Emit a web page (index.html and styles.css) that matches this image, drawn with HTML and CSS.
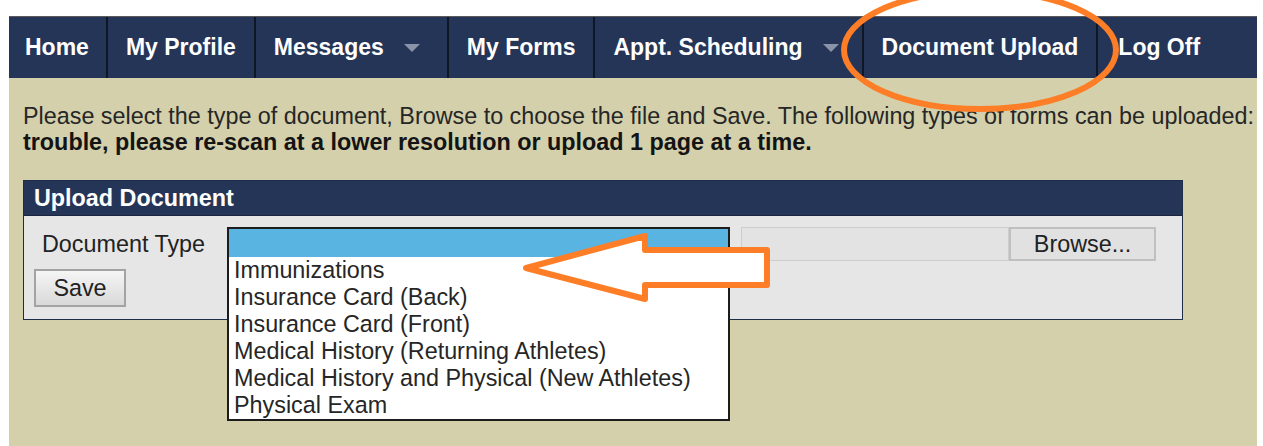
FILE: index.html
```html
<!DOCTYPE html>
<html lang="en">
<head>
<meta charset="utf-8">
<title>Document Upload</title>
<link rel="stylesheet" href="styles.css">
</head>
<body>
<div class="page">
  <nav class="topnav">
    <a class="nav-item first" href="#">Home</a>
    <a class="nav-item" href="#">My Profile</a>
    <a class="nav-item has-menu messages" href="#">Messages<span class="caret"></span></a>
    <a class="nav-item" href="#">My Forms</a>
    <a class="nav-item has-menu scheduling" href="#">Appt. Scheduling<span class="caret"></span></a>
    <a class="nav-item" href="#">Document Upload</a>
    <a class="nav-item last" href="#">Log Off</a>
  </nav>

  <main class="content">
    <p class="intro">
      <span class="line">Please select the type of document, Browse to choose the file and Save. The following types of forms can be uploaded:</span>
      <strong class="line">trouble, please re-scan at a lower resolution or upload 1 page at a time.</strong>
    </p>

    <section class="panel">
      <h2 class="panel-title">Upload Document</h2>
      <div class="panel-body">
        <div class="field-row">
          <label class="field-label">Document Type</label>
          <div class="select-wrap">
            <div class="select-box"></div>
            <ul class="select-list">
              <li class="selected"></li>
              <li>Immunizations</li>
              <li>Insurance Card (Back)</li>
              <li>Insurance Card (Front)</li>
              <li>Medical History (Returning Athletes)</li>
              <li>Medical History and Physical (New Athletes)</li>
              <li>Physical Exam</li>
            </ul>
          </div>
          <div class="file-input">
            <span class="file-name"></span>
            <button class="browse" type="button">Browse...</button>
          </div>
        </div>
        <button class="save" type="button">Save</button>
      </div>
    </section>
  </main>
</div>

<svg class="markup" width="1263" height="446" viewBox="0 0 1263 446" aria-hidden="true">
  <ellipse cx="980" cy="50" rx="136" ry="59" fill="none" stroke="#fd7e26" stroke-width="6"/>
  <polygon points="526,268 645,236 645,250 767,250 767,285 645,285 645,299"
           fill="#ffffff" stroke="#fd7e26" stroke-width="6" stroke-linejoin="round"/>
</svg>
</body>
</html>
```

FILE: styles.css
```css
* {
  box-sizing: border-box;
}

html,
body {
  margin: 0;
  padding: 0;
  background: #ffffff;
}

body {
  position: relative;
  width: 1263px;
  height: 446px;
  overflow: hidden;
  font-family: "Liberation Sans", Arial, sans-serif;
  font-size: 23.35px;
  color: #262626;
}

.page {
  margin: 16px 0 0 9px;
  width: 1248px;
  height: 430px;
  background: #d3d0ab;
  overflow: hidden;
}

/* ---- top navigation ---- */
.topnav {
  display: flex;
  height: 62px;
  background: #253558;
  border-top: 1px solid #5a5a5a;
  font-size: 23px;
}

.nav-item {
  display: flex;
  align-items: center;
  padding: 0 18px;
  color: #ffffff;
  font-weight: bold;
  text-decoration: none;
  white-space: nowrap;
  border-right: 2px solid #0f1626;
}

.nav-item.first {
  padding-left: 16px;
  padding-right: 17px;
}

.nav-item.messages {
  padding-right: 27px;
}

.nav-item.scheduling {
  padding-right: 23px;
}

.nav-item.last {
  border-right: 0;
  padding-left: 20px;
}

.caret {
  width: 0;
  height: 0;
  margin-left: 20px;
  border-left: 8px solid transparent;
  border-right: 8px solid transparent;
  border-top: 8px solid #8a93a8;
}

/* ---- page content ---- */
.content {
  padding: 25px 0 0 14px;
}

.intro {
  margin: 0 0 25px 0;
  line-height: 26px;
}

.intro .line {
  display: block;
  white-space: nowrap;
}

.intro strong {
  color: #141414;
}

/* ---- upload panel ---- */
.panel {
  width: 1160px;
  border: 1px solid #1f2c4a;
}

.panel-title {
  margin: 0;
  height: 35px;
  padding-left: 10px;
  font-size: 23.35px;
  line-height: 34px;
  font-weight: bold;
  color: #ffffff;
  background: #253558;
  border-bottom: 1px solid #1b2540;
}

.panel-body {
  display: flex;
  flex-direction: column;
  align-items: flex-start;
  gap: 8px;
  height: 103px;
  padding: 11px 0 0 10px;
  background: #e6e6e6;
}

.field-row {
  display: grid;
  grid-template-columns: 182px 503px 415px;
  column-gap: 11px;
  align-items: center;
  height: 34px;
}

.field-label {
  padding-left: 8px;
  color: #222222;
  white-space: nowrap;
}

.select-wrap {
  position: relative;
  height: 34px;
}

.select-box {
  height: 34px;
  border: 1px solid #a9a9a9;
  background: #ffffff;
}

.select-list {
  position: absolute;
  top: 0;
  left: 0;
  z-index: 2;
  width: 503px;
  margin: 0;
  padding: 0;
  list-style: none;
  background: #ffffff;
  border: 2px solid #1c1c1c;
}

.select-list li {
  height: 27px;
  padding-left: 5px;
  line-height: 27px;
  color: #262626;
  white-space: nowrap;
}

.select-list li.selected {
  height: 28px;
  background: #5ab4e1;
}

.file-input {
  display: flex;
  height: 34px;
}

.file-name {
  flex: 1;
  border: 1px solid #cdcdcd;
  background: #e3e3e3;
}

.browse {
  width: 147px;
  height: 34px;
  padding: 0;
  font-family: inherit;
  font-size: 23.35px;
  color: #222222;
  background: #e1e1e1;
  border: 2px solid #c0c0c0;
  border-radius: 0;
  appearance: none;
}

.save {
  width: 92px;
  height: 38px;
  padding: 0;
  font-family: inherit;
  font-size: 23.35px;
  color: #222222;
  background: linear-gradient(#f5f5f5, #d9d9d9);
  border: 2px solid #a3a3a3;
  border-radius: 0;
  appearance: none;
}

/* ---- annotation layer ---- */
.markup {
  position: absolute;
  top: 0;
  left: 0;
  z-index: 5;
  pointer-events: none;
}
```
